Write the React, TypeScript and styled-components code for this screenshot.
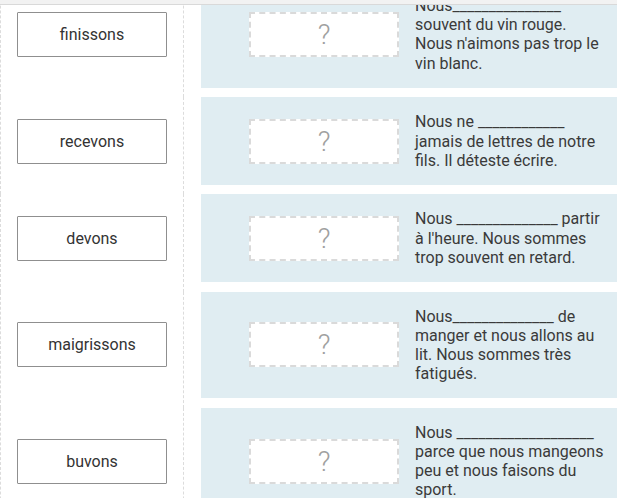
import React from "react";
import styled, { createGlobalStyle } from "styled-components";

const Global = createGlobalStyle`
  html, body { margin: 0; padding: 0; height: 100%; overflow: hidden; background: #fff; }
  body { font-family: Roboto, "Liberation Sans", sans-serif; color: #333; }
`;

const Page = styled.div`
  height: 498px;
  display: flex;
  flex-direction: column;
  overflow: hidden;
`;

const TopBar = styled.div`
  flex: 0 0 4px;
  background: #f2f2f2;
  border-bottom: 1px solid #d9d9d9;
  position: relative;
  z-index: 2;
`;

const Viewport = styled.div`
  flex: 1;
  overflow: hidden;
`;

const Scroller = styled.div<{ $offset: number }>`
  margin-top: ${(p) => -p.$offset}px;
  display: flex;
  flex-direction: column;
`;

const Row = styled.div`
  display: grid;
  grid-template-columns: 184px 1fr;
  column-gap: 17px;
`;

const WordCell = styled.div`
  box-sizing: border-box;
  border-left: 1px dashed #dcdcdc;
  border-right: 1px dashed #dcdcdc;
  padding: 0 16px 9.5px 16px;
  display: flex;
  align-items: center;
`;

const WordBox = styled.div`
  box-sizing: border-box;
  width: 150px;
  height: 45px;
  border: 1px solid #8f8f8f;
  border-radius: 1px;
  background: #fff;
  display: flex;
  align-items: center;
  justify-content: center;
  font-size: 16px;
  color: #333;
`;

const Panel = styled.div`
  margin-bottom: 9.5px;
  background: #e0edf2;
  padding: 15px 13px 15px 48px;
  display: flex;
  align-items: center;
  gap: 16px;
`;

const DropZone = styled.div`
  box-sizing: border-box;
  flex: 0 0 150px;
  height: 45px;
  border: 2px dashed #dadada;
  background: #fff;
  display: flex;
  align-items: center;
  justify-content: center;
  font-size: 28px;
  font-weight: 300;
  color: #a0a0a0;
`;

const Sentence = styled.div`
  flex: 1;
  font-size: 16px;
  line-height: 19.2px;
  color: #3a3a3a;
`;

const items: { word: string; text: React.ReactNode }[] = [
  {
    word: "finissons",
    text: (
      <>
        Nous_______________ souvent du vin rouge.
        <br />
        Nous n'aimons pas trop le vin blanc.
      </>
    ),
  },
  { word: "recevons", text: "Nous ne ____________ jamais de lettres de notre fils. Il déteste écrire." },
  { word: "devons", text: "Nous ______________ partir à l'heure. Nous sommes trop souvent en retard." },
  { word: "maigrissons", text: "Nous______________ de manger et nous allons au lit. Nous sommes très fatigués." },
  { word: "buvons", text: "Nous ___________________ parce que nous mangeons peu et nous faisons du sport." },
];

export default function App() {
  return (
    <>
      <Global />
      <Page>
        <TopBar />
        <Viewport>
          <Scroller $offset={24}>
            {items.map((it) => (
              <Row key={it.word}>
                <WordCell>
                  <WordBox>{it.word}</WordBox>
                </WordCell>
                <Panel>
                  <DropZone>?</DropZone>
                  <Sentence>{it.text}</Sentence>
                </Panel>
              </Row>
            ))}
          </Scroller>
        </Viewport>
      </Page>
    </>
  );
}
